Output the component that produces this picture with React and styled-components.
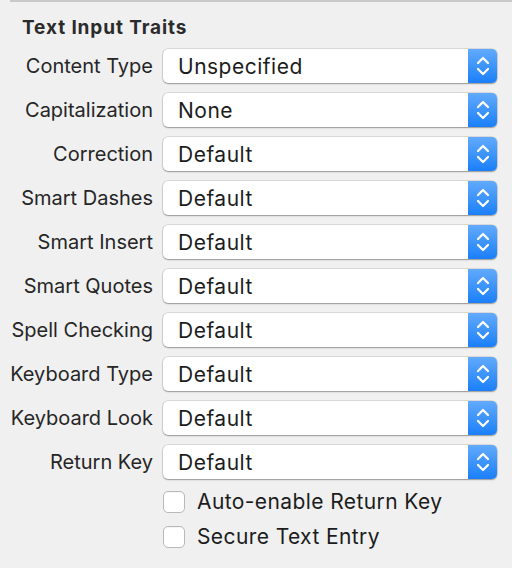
import React from 'react';
import styled, { createGlobalStyle } from 'styled-components';

const GlobalStyle = createGlobalStyle`
  html, body {
    margin: 0;
    padding: 0;
    background: #f0f0f0;
  }
  body {
    font-family: Inter, "Liberation Sans", sans-serif;
    color: #262626;
  }
`;

const Panel = styled.div`
  width: 512px;
  height: 568px;
  overflow: hidden;
  background: #f0f0f0;
`;

const TopRule = styled.div`
  height: 2px;
  margin-left: 10px;
  background: #c9c9c9;
`;

const Heading = styled.h2`
  margin: 0;
  padding: 15px 0 0 22px;
  height: 34px;
  box-sizing: border-box;
  font-size: 19px;
  font-weight: 700;
  letter-spacing: 0.9px;
  color: #2b2b2b;
  line-height: 22px;
`;

const Form = styled.div`
  display: grid;
  grid-template-columns: 153px 334px;
  grid-auto-rows: 34px;
  column-gap: 10px;
  row-gap: 10px;
  padding-top: 13px;
`;

const Label = styled.label`
  text-align: right;
  font-size: 20px;
  line-height: 35px;
  color: #262626;
  white-space: nowrap;
`;

const Popup = styled.div`
  display: flex;
  height: 34px;
  box-sizing: border-box;
  border-radius: 5px;
  background: #fff;
  box-shadow: 0 0 0 0.5px rgba(0, 0, 0, 0.18), 0 1px 1.5px rgba(0, 0, 0, 0.3);
  overflow: hidden;
`;

const PopupValue = styled.span`
  flex: 1;
  padding-left: 15px;
  font-size: 21px;
  letter-spacing: 0.5px;
  line-height: 35px;
  color: #1c1c1c;
`;

const Stepper = styled.span`
  width: 29px;
  display: flex;
  align-items: center;
  justify-content: center;
  background: linear-gradient(#62aafc, #1b7ff9);
`;

const Checks = styled.div`
  grid-column: 2;
  display: flex;
  flex-direction: column;
  gap: 10px;
  padding-top: 0;
`;

const CheckRow = styled.label`
  display: flex;
  align-items: center;
  gap: 12px;
  font-size: 21px;
  letter-spacing: 0.4px;
  color: #1c1c1c;
  height: 26px;
`;

const Box = styled.span`
  width: 22px;
  height: 22px;
  box-sizing: border-box;
  border-radius: 5px;
  background: #fff;
  border: 1px solid #b9b9b9;
  box-shadow: inset 0 1px 0 rgba(0, 0, 0, 0.04);
`;

const Chevrons = () => (
  <svg width="16" height="24" viewBox="0 0 16 24" fill="none" stroke="#fff" strokeWidth="2.2" strokeLinecap="round" strokeLinejoin="round">
    <polyline points="3,9 8,4 13,9" />
    <polyline points="3,15 8,20 13,15" />
  </svg>
);

const rows = [
  ['Content Type', 'Unspecified'],
  ['Capitalization', 'None'],
  ['Correction', 'Default'],
  ['Smart Dashes', 'Default'],
  ['Smart Insert', 'Default'],
  ['Smart Quotes', 'Default'],
  ['Spell Checking', 'Default'],
  ['Keyboard Type', 'Default'],
  ['Keyboard Look', 'Default'],
  ['Return Key', 'Default'],
];

export default function App() {
  return (
    <Panel>
      <GlobalStyle />
      <TopRule />
      <Heading>Text Input Traits</Heading>
      <Form>
        {rows.map(([label, value]) => (
          <React.Fragment key={label}>
            <Label>{label}</Label>
            <Popup>
              <PopupValue>{value}</PopupValue>
              <Stepper>
                <Chevrons />
              </Stepper>
            </Popup>
          </React.Fragment>
        ))}
        <Checks>
          <CheckRow>
            <Box />
            Auto-enable Return Key
          </CheckRow>
          <CheckRow>
            <Box />
            Secure Text Entry
          </CheckRow>
        </Checks>
      </Form>
    </Panel>
  );
}
